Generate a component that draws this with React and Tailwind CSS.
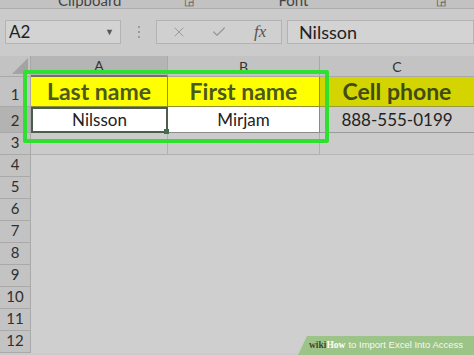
import { X, Check } from "lucide-react";

const rows = [4, 5, 6, 7, 8, 9, 10, 11, 12];

function RowHead({ n, h, active }) {
  return (
    <div
      className={`flex items-end justify-center border-b border-r border-[#a9a9a9] pb-[1px] text-[15px] text-[#2f2f2f] ${active ? "bg-[#b3b3b3]" : "bg-[#c3c3c3]"} ${h}`}
    >
      {n}
    </div>
  );
}

export default function App() {
  return (
    <div
      className="relative h-[355px] w-[474px] overflow-hidden bg-[#cbcbcb]"
      style={{ fontFamily: "Lato, 'Noto Sans', sans-serif" }}
    >
      {/* ribbon group labels, cut off */}
      <div className="flex h-[9px] overflow-hidden border-b border-[#adadad] bg-[#c2c2c2] text-[15px] leading-[15px] text-[#444]">
        <span className="ml-[58px] -mt-[7px]">Clipboard</span>
        <span className="ml-[62px] -mt-[7px] text-[11px]">◲</span>
        <span className="ml-[85px] -mt-[7px]">Font</span>
        <span className="ml-[128px] -mt-[7px] text-[11px]">◲</span>
      </div>

      {/* formula bar */}
      <div className="flex h-[47px] items-center pb-[2px] pt-[1px]">
        <div className="ml-[5px] flex h-[24px] w-[116px] items-center justify-between border border-[#b3b3b3] bg-[#d3d3d3] pl-[3px] pr-[6px] text-[17px] text-[#222]">
          <span>A2</span>
          <span className="text-[9px] text-[#555]">▼</span>
        </div>
        <div className="ml-[16px] flex w-[4px] flex-col items-center gap-[3px]">
          <span className="h-[2px] w-[2px] rounded-full bg-[#8a8a8a]" />
          <span className="h-[2px] w-[2px] rounded-full bg-[#8a8a8a]" />
          <span className="h-[2px] w-[2px] rounded-full bg-[#8a8a8a]" />
        </div>
        <div className="ml-[15px] flex h-[24px] w-[126px] items-center border border-[#b3b3b3] bg-[#d0d0d0]">
          <X className="ml-[14px] h-[16px] w-[16px] text-[#9a9a9a]" strokeWidth={1.5} />
          <Check className="ml-[24px] h-[16px] w-[16px] text-[#9a9a9a]" strokeWidth={2} />
          <span
            className="ml-[27px] text-[17px] italic text-[#555]"
            style={{ fontFamily: "'Liberation Serif', serif" }}
          >
            fx
          </span>
        </div>
        <div className="ml-[5px] flex h-[24px] flex-1 items-center border border-[#b3b3b3] bg-[#d3d3d3] pl-[11px] text-[18px] text-[#222]">
          Nilsson
        </div>
      </div>

      {/* sheet grid */}
      <div className="grid grid-cols-[31px_137px_152px_154px]">
        {/* column headers */}
        <div className="relative h-[21px] border-b border-r border-[#a9a9a9] bg-[#c3c3c3]">
          <svg className="absolute bottom-[2px] right-[2px]" width="16" height="16">
            <polygon points="16,0 16,16 0,16" fill="#a3a3a3" />
          </svg>
        </div>
        <div className="flex h-[21px] items-center justify-center border-b-2 border-r border-b-[#6f6f6f] border-r-[#a9a9a9] bg-[#b5b5b5] text-[14px] text-[#333]">
          A
        </div>
        <div className="flex h-[21px] items-center justify-center border-b border-r border-[#a9a9a9] bg-[#c3c3c3] text-[14px] text-[#333]">
          B
        </div>
        <div className="flex h-[21px] items-center justify-center border-b border-[#a9a9a9] bg-[#c3c3c3] text-[14px] text-[#333]">
          C
        </div>

        {/* row 1 */}
        <RowHead n={1} h="h-[30px]" />
        <div className="flex h-[30px] items-center justify-center border-b border-r border-[#8f8f3a] bg-[#ffff00] text-[23px] font-bold text-[#4a5a1c]">
          Last name
        </div>
        <div className="flex h-[30px] items-center justify-center border-b border-r border-[#8f8f3a] bg-[#ffff00] text-[23px] font-bold text-[#4a5a1c]">
          First name
        </div>
        <div className="flex h-[30px] items-center justify-center border-b border-[#9a9a3a] bg-[#d4d400] text-[23px] font-bold text-[#404c14]">
          Cell phone
        </div>

        {/* row 2 */}
        <RowHead n={2} h="h-[26px]" active />
        <div className="relative flex h-[26px] items-center justify-center border-2 border-[#4d5d4d] bg-white text-[17px] text-[#222]">
          Nilsson
          <span className="absolute -bottom-[3px] -right-[3px] h-[5px] w-[5px] bg-[#3f6f4f]" />
        </div>
        <div className="flex h-[26px] items-center justify-center border-b border-r border-[#8a8a8a] bg-white text-[17px] text-[#222]">
          Mirjam
        </div>
        <div className="flex h-[26px] items-center justify-center border-b border-[#9a9a9a] bg-[#cbcbcb] text-[17px] text-[#222]">
          888-555-0199
        </div>

        {/* row 3 */}
        <RowHead n={3} h="h-[22px]" />
        <div className="h-[22px] border-b border-r border-[#b0b0b0]" />
        <div className="h-[22px] border-b border-r border-[#b0b0b0]" />
        <div className="h-[22px] border-b border-[#b8b8b8]" />

        {rows.map((n) => (
          <div key={n} className="contents">
            <RowHead n={n} h="h-[22px]" />
            <div className="col-span-3 h-[22px] bg-[#cfcfcf]" />
          </div>
        ))}
      </div>

      {/* green highlight frame */}
      <div className="absolute left-[23px] top-[70px] h-[73px] w-[306px] rounded-[2px] border-[4px] border-[#2fe02f]" />

      {/* wikiHow badge */}
      <div className="absolute bottom-0 right-0 flex h-[19px] w-[176px] items-center whitespace-nowrap bg-[#9cc488] pl-[11px] text-[9.5px] text-[#f4f8f0] [clip-path:polygon(9px_0,100%_0,100%_100%,0_100%)]">
        <span className="font-bold text-[#3b4a30]" style={{ fontFamily: "'Liberation Serif', serif" }}>
          wiki
        </span>
        <span className="font-bold text-white" style={{ fontFamily: "'Liberation Serif', serif" }}>
          How
        </span>
        <span className="ml-[3px]" style={{ fontFamily: "'Liberation Sans', sans-serif" }}>
          to Import Excel Into Access
        </span>
      </div>
    </div>
  );
}
